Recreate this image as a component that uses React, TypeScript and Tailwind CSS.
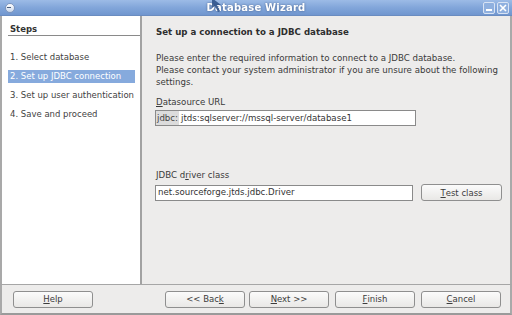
import React from "react";

const Btn = ({ children, w = 80 }: { children: React.ReactNode; w?: number }) => (
  <div
    className="h-[17px] flex items-center justify-center rounded-[3px] border border-[#8f8f8f] bg-gradient-to-b from-[#fbfbfb] to-[#e9e8e6] text-[#3c3c3c] text-[8.5px]"
    style={{ width: w }}
  >
    {children}
  </div>
);

export default function App() {
  return (
    <div
      className="w-[512px] h-[315px] flex flex-col bg-[#edeceb] overflow-hidden"
      style={{ fontFamily: '"DejaVu Sans", sans-serif' }}
    >
      {/* Title bar */}
      <div className="h-[16px] shrink-0 relative flex items-center justify-center bg-gradient-to-b from-[#9cbbe6] via-[#82a6da] to-[#7096cf] border-b border-[#6a8cc0]">
        <div className="absolute left-[5px] top-[3px] w-[10px] h-[10px] rounded-full bg-gradient-to-b from-white to-[#c9d6ea] border border-[#7d95bd]">
          <div className="absolute left-[1px] top-[3px] w-[4px] h-[1px] bg-[#4a5f80]" />
        </div>
        <span className="text-white font-bold text-[10px] tracking-[0.2px] drop-shadow-[0_0_1px_rgba(40,60,100,0.6)]">
          Database Wizard
        </span>
        <div className="absolute right-[3px] top-[2px] flex gap-[2px]">
          <div className="w-[12px] h-[12px] rounded-[2px] border border-[#d8e3f4] bg-[#8fb0df] flex items-end justify-center pb-[2px]">
            <div className="w-[6px] h-[2px] bg-white" />
          </div>
          <div className="w-[12px] h-[12px] rounded-[2px] border border-[#d8e3f4] bg-[#8fb0df] flex items-center justify-center">
            <svg width="8" height="8" viewBox="0 0 8 8">
              <path d="M1 1 L7 7 M7 1 L1 7" stroke="white" strokeWidth="1.6" />
            </svg>
          </div>
        </div>
        {/* mouse cursor */}
        <svg className="absolute left-[211px] top-[-2px]" width="14" height="16" viewBox="0 0 14 16">
          <path d="M1 0 L1 10 L4 8 L7 14 L9 13 L6 7 L10 7 Z" fill="#2a4f86" opacity="0.85" />
        </svg>
      </div>

      {/* Content */}
      <div className="flex-1 flex border-l-2 border-r-2 border-[#a9a9a9] min-h-0">
        {/* Left steps panel */}
        <div className="w-[140px] shrink-0 bg-white border-r-2 border-[#a2a2a2] text-[8.5px] text-[#3f3f3f]">
          <div className="ml-[6px] mt-[8px] border-b border-[#8a8a8a] h-[12px] flex items-center">
            <span className="ml-[2px] font-bold text-[#333]" style={{ fontWeight: 600 }}>Steps</span>
          </div>
          <div className="mt-[15px] ml-[6px] flex flex-col gap-[6px]">
            <div className="h-[13px] flex items-center pl-[2px]">1. Select database</div>
            <div className="h-[13px] w-[127px] flex items-center pl-[2px] bg-[#86aadd] text-white">
              2. Set up JDBC connection
            </div>
            <div className="h-[13px] flex items-center pl-[2px] whitespace-nowrap">3. Set up user authentication</div>
            <div className="h-[13px] flex items-center pl-[2px]">4. Save and proceed</div>
          </div>
        </div>

        {/* Right panel */}
        <div className="flex-1 pl-[14px] pr-[6px] text-[8.65px] text-[#3a3a3a]">
          <div className="mt-[10px] h-[12px] flex items-center font-bold text-[#2e2e2e]">
            Set up a connection to a JDBC database
          </div>
          <div className="mt-[15px] leading-[11.8px]">
            Please enter the required information to connect to a JDBC database.
            <br />
            Please contact your system administrator if you are unsure about the following settings.
          </div>
          <div className="mt-[8px] h-[12px] flex items-center">
            <span className="underline">D</span>atasource URL
          </div>
          <div className="mt-[2px] -ml-[1px] w-[261px] h-[16px] bg-white border border-[#8a8a8a] flex items-center text-[#333]">
            <span className="h-full flex items-center pl-[1px] pr-[1px] bg-[#dcdcdc] text-[#444]">jdbc:</span>
            <span className="ml-[2px]">jtds:sqlserver://mssql-server/database1</span>
          </div>
          <div className="mt-[43px] h-[12px] flex items-center">
            JDBC d<span className="underline">r</span>iver class
          </div>
          <div className="mt-[3px] -ml-[1px] flex items-center">
            <div className="w-[258px] h-[16px] bg-white border border-[#8a8a8a] flex items-center pl-[2px] text-[#333]">
              net.sourceforge.jtds.jdbc.Driver
            </div>
            <div className="ml-[8px]">
              <Btn w={81}>
                <span className="underline">T</span>est class
              </Btn>
            </div>
          </div>
        </div>
      </div>

      {/* Button bar */}
      <div className="h-[31px] shrink-0 border-t border-[#a6a6a6] border-l-2 border-r-2 border-b-2 border-l-[#a9a9a9] border-r-[#a9a9a9] border-b-[#9a9a9a] flex items-center pl-[11px]">
        <Btn>
          <span className="underline">H</span>elp
        </Btn>
        <div className="ml-[72px] flex gap-[4px]">
          <Btn>
            &lt;&lt; Bac<span className="underline">k</span>
          </Btn>
          <Btn>
            <span className="underline">N</span>ext &gt;&gt;
          </Btn>
          <div className="ml-[2px]">
            <Btn>
              <span className="underline">F</span>inish
            </Btn>
          </div>
          <div className="ml-[2px]">
            <Btn>
              <span className="underline">C</span>ancel
            </Btn>
          </div>
        </div>
      </div>
    </div>
  );
}
